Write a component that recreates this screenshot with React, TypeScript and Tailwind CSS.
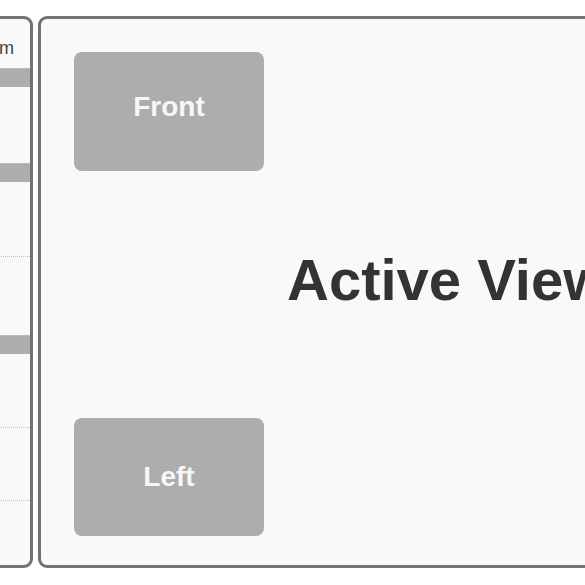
import React from "react";

const font = { fontFamily: '"Liberation Sans", Arial, sans-serif' };

function Bar() {
  return <div className="h-[19px] shrink-0 bg-[#adadad] border-t border-dotted border-[#c8c8c8]" />;
}

function Row({ h, divider }: { h: number; divider?: boolean }) {
  return (
    <div
      className={"shrink-0 " + (divider ? "border-b border-dotted border-[#bdbdbd]" : "")}
      style={{ height: h }}
    />
  );
}

export default function App() {
  return (
    <div className="w-[585px] h-[585px] overflow-hidden bg-white" style={font}>
      <div className="flex gap-[5px] pt-[16px] h-[568px]">
        {/* left panel */}
        <div className="w-[180px] -ml-[147px] shrink-0 rounded-[9px] border-[3px] border-[#727272] bg-[#f9f9f9] overflow-hidden flex flex-col">
          <div className="h-[49px] shrink-0 flex items-center justify-end pr-[16px] pt-[9px] text-[18px] text-[#444]">
            Custom
          </div>
          <Bar />
          <Row h={76} />
          <Bar />
          <Row h={75} divider />
          <Row h={78} />
          <Bar />
          <Row h={74} divider />
          <Row h={73} divider />
          <div className="flex-1" />
        </div>
        {/* right panel */}
        <div className="w-[820px] shrink-0 rounded-[9px] border-[3px] border-[#727272] bg-[#f9f9f9] flex">
          <div className="flex flex-col justify-between pl-[33px] pt-[33px] pb-[29px]">
            <div className="w-[190px] h-[119px] rounded-[8px] bg-[#adadad] flex items-center justify-center pb-[9px] text-[28px] font-bold text-[#f7f7f7]">
              Front
            </div>
            <div className="w-[190px] h-[118px] rounded-[8px] bg-[#adadad] flex items-center justify-center text-[28px] font-bold text-[#f7f7f7]">
              Left
            </div>
          </div>
          <div className="flex-1 flex items-center pl-[23px] pb-[24px]">
            <span className="text-[58px] font-bold text-[#333] leading-none whitespace-nowrap">Active View</span>
          </div>
        </div>
      </div>
    </div>
  );
}
